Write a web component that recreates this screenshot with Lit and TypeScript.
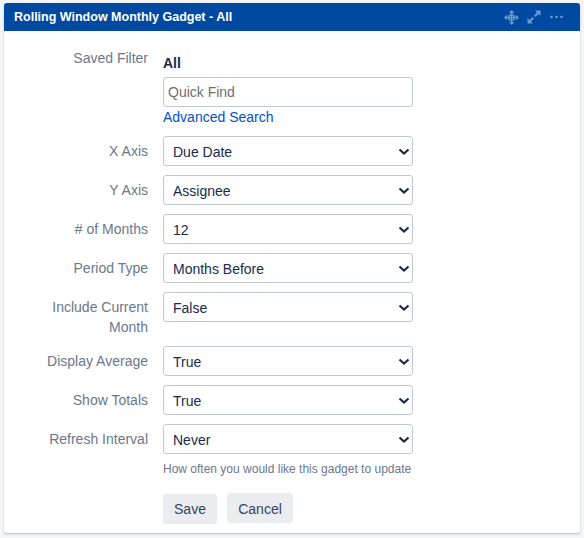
import { LitElement, html, css } from "lit";
import { customElement } from "lit/decorators.js";

const rows: { label: string; value: string; cls?: string }[] = [
  { label: "X Axis", value: "Due Date" },
  { label: "Y Axis", value: "Assignee" },
  { label: "# of Months", value: "12" },
  { label: "Period Type", value: "Months Before" },
  { label: "Include Current Month", value: "False", cls: "tall" },
  { label: "Display Average", value: "True" },
  { label: "Show Totals", value: "True" },
];

@customElement("app-root")
export class AppRoot extends LitElement {
  static styles = css`
    :host {
      display: block;
      width: 584px;
      height: 538px;
      box-sizing: border-box;
      padding: 3px 4px 5px;
      background: #f4f5f7;
      font-family: "Liberation Sans", Arial, sans-serif;
      font-size: 14px;
      color: #172b4d;
      overflow: hidden;
    }
    .card {
      height: 530px;
      background: #fff;
      border-radius: 3px;
      box-shadow: 0 1px 2px rgba(9, 30, 66, 0.25);
      overflow: hidden;
    }
    .head {
      height: 28px;
      background: #0049a0;
      display: flex;
      align-items: center;
      justify-content: space-between;
      padding: 0 17px 0 10px;
      color: #fff;
      font-size: 12.5px;
      font-weight: 700;
    }
    .icons {
      display: flex;
      align-items: center;
      gap: 8px;
      color: #6f9bd1;
    }
    .icons svg {
      display: block;
    }
    .dots {
      margin-left: 1px;
    }
    .form {
      display: flex;
      flex-direction: column;
      padding-top: 17px;
    }
    .row {
      display: grid;
      grid-template-columns: 144px 250px;
      column-gap: 15px;
      margin-bottom: 9px;
    }
    .row.last {
      margin-bottom: 0;
    }
    .row.tall {
      min-height: 45px;
    }
    .label {
      box-sizing: border-box;
      padding-left: 40px;
      text-align: right;
      color: #6b778c;
      line-height: 20px;
      padding-top: 5px;
    }
    .filter-label {
      padding-top: 0;
      padding-left: 0;
    }
    .filter {
      display: flex;
      flex-direction: column;
    }
    .all {
      font-weight: 700;
      line-height: 20px;
      padding-top: 5px;
      margin-bottom: 4px;
    }
    input {
      box-sizing: border-box;
      width: 250px;
      height: 30px;
      border: 1px solid #c1c7d0;
      border-radius: 3px;
      padding: 0 4px;
      font: inherit;
      color: #172b4d;
      outline: none;
    }
    input::placeholder {
      color: #6f6f6f;
      opacity: 1;
    }
    a {
      color: #0052cc;
      text-decoration: none;
      line-height: 20px;
    }
    .sel {
      position: relative;
      height: 30px;
    }
    select {
      appearance: none;
      box-sizing: border-box;
      width: 250px;
      height: 30px;
      border: 1px solid #c1c7d0;
      border-radius: 3px;
      background: #fff;
      padding: 2px 9px 0;
      font: inherit;
      color: #172b4d;
      outline: none;
    }
    .chev {
      position: absolute;
      right: 3px;
      top: 12px;
      pointer-events: none;
    }
    .help {
      font-size: 12px;
      line-height: 16px;
      color: #6b778c;
      margin-top: 7px;
    }
    .buttons {
      display: flex;
      align-items: flex-start;
      gap: 10px;
      margin-left: 159px;
      margin-top: 16px;
    }
    button {
      height: 30px;
      border: none;
      border-radius: 3px;
      background: #ebecf0;
      color: #344563;
      font: inherit;
      padding: 0;
    }
    .save {
      width: 54px;
      margin-top: 1px;
    }
    .cancel {
      width: 66px;
      padding-top: 2px;
    }
  `;

  private select(value: string) {
    return html`<div class="sel">
      <select aria-label=${value}><option>${value}</option></select>
      <svg class="chev" width="12" height="8" viewBox="0 0 12 8" fill="none" stroke="#172b4d" stroke-width="2.2">
        <path d="M1.5 1.5 L6 5.5 L10.5 1.5" />
      </svg>
    </div>`;
  }

  render() {
    return html`<div class="card">
      <div class="head">
        <span>Rolling Window Monthly Gadget - All</span>
        <div class="icons">
          <svg width="15" height="15" viewBox="0 0 15 15" fill="currentColor">
            <path d="M7.5 0 L10.5 3 H5 Z M7.5 15 L5 12 H10.5 Z M0 7.5 L3 4.8 V10.2 Z M15 7.5 L12 10.2 V4.8 Z" />
            <path d="M7.5 3.2 V11.8 M3.2 7.5 H11.8" fill="none" stroke="currentColor" stroke-width="1.4" />
            <circle cx="7.5" cy="7.5" r="2.9" fill="none" stroke="currentColor" stroke-width="1.4" />
          </svg>
          <svg width="14" height="14" viewBox="0 0 14 14" fill="currentColor">
            <path d="M8 0.5 H13.5 V6 L11.5 4 L8.5 7 L7 5.5 L10 2.5 Z M0.5 13.5 V8 L2.5 10 L5.5 7 L7 8.5 L4 11.5 L6 13.5 Z" />
          </svg>
          <svg class="dots" width="13" height="4" viewBox="0 0 13 4" fill="currentColor">
            <circle cx="1.5" cy="2" r="1.3" /><circle cx="6.5" cy="2" r="1.3" /><circle cx="11.5" cy="2" r="1.3" />
          </svg>
        </div>
      </div>
      <div class="form">
        <div class="row">
          <div class="label filter-label">Saved Filter</div>
          <div class="filter">
            <div class="all">All</div>
            <input placeholder="Quick Find" aria-label="Quick Find" />
            <a href="#">Advanced Search</a>
          </div>
        </div>
        ${rows.map(
          (r) => html`<div class="row ${r.cls ?? ""}">
            <div class="label">${r.label}</div>
            ${this.select(r.value)}
          </div>`
        )}
        <div class="row last">
          <div class="label">Refresh Interval</div>
          <div>
            ${this.select("Never")}
            <div class="help">How often you would like this gadget to update</div>
          </div>
        </div>
        <div class="buttons">
          <button class="save">Save</button>
          <button class="cancel">Cancel</button>
        </div>
      </div>
    </div>`;
  }
}
